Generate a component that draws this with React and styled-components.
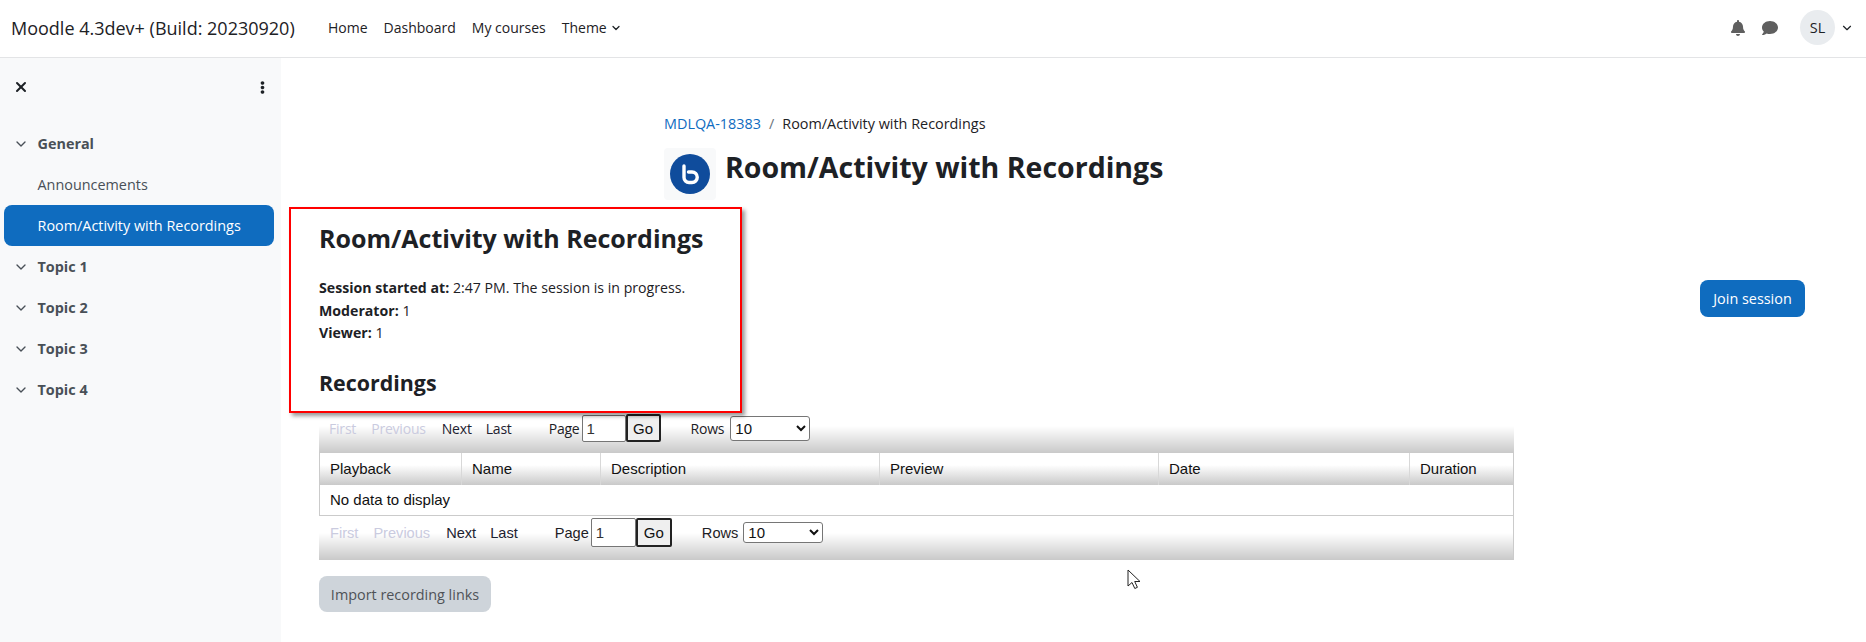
import React from 'react';
import styled, { createGlobalStyle } from 'styled-components';
import { FaBell, FaComment, FaEllipsisV } from 'react-icons/fa';
import { ChevronDown, X } from 'lucide-react';

const UI = '"Open Sans", "Noto Sans", sans-serif';
const ARIAL = '"Liberation Sans", Arial, sans-serif';

const Global = createGlobalStyle`
  html, body { margin: 0; padding: 0; background: #fff; overflow: hidden; }
  * { box-sizing: border-box; }
  body { font-family: ${UI}; color: #1d2125; }
`;

const Page = styled.div`
  width: 1866px;
  height: 642px;
  display: flex;
  flex-direction: column;
  position: relative;
`;

const Navbar = styled.header`
  height: 58px;
  flex: none;
  display: flex;
  align-items: center;
  border-bottom: 1px solid #e3e4e6;
  padding: 0 0 2px 11px;
`;

const Brand = styled.span`
  font-size: 18px;
  width: 317px;
  flex: none;
`;

const NavLinks = styled.nav`
  display: flex;
  gap: 16px;
  font-size: 14px;
`;

const NavLink = styled.span`
  display: inline-flex;
  align-items: center;
  gap: 3px;
`;

const NavRight = styled.div`
  margin-left: auto;
  display: flex;
  align-items: center;
  color: #5f5f5f;
  padding-right: 12px;
`;

const NavIcon = styled.span`
  display: inline-flex;
  width: ${(p) => p.$w}px;
  justify-content: center;
  font-size: 16px;
`;

const Avatar = styled.span`
  width: 35px;
  height: 35px;
  border-radius: 50%;
  background: #e9ecef;
  color: #1d2125;
  display: flex;
  align-items: center;
  justify-content: center;
  font-size: 14.4px;
  margin: 0 5px 0 14px;
`;

const Body = styled.div`
  flex: 1;
  display: flex;
  min-height: 0;
`;

const Sidebar = styled.aside`
  width: 281px;
  flex: none;
  background: #f8f9fa;
  padding: 0 7px 0 4px;
`;

const SideTop = styled.div`
  height: 58px;
  display: flex;
  align-items: center;
  justify-content: space-between;
  padding: 0 5px 0 9px;
  color: #1d2125;
  margin-bottom: 7px;
`;

const SideRow = styled.div`
  height: 41px;
  display: flex;
  align-items: center;
  border-radius: 8px;
  padding-left: ${(p) => (p.$section ? '9px' : '33.5px')};
  font-size: 14.4px;
  font-weight: ${(p) => (p.$section ? 700 : 400)};
  color: ${(p) => (p.$active ? '#fff' : '#495057')};
  background: ${(p) => (p.$active ? '#0f6cbf' : 'transparent')};
  gap: 8.5px;
`;

const Main = styled.main`
  flex: 1;
  position: relative;
  padding: 55px 61px 0 38px;
`;

const Breadcrumb = styled.div`
  margin-left: 345px;
  font-size: 14.4px;
  line-height: 22px;
  display: flex;
  gap: 8px;
`;

const Crumb = styled.span`
  color: ${(p) => (p.$link ? '#0f6cbf' : p.$sep ? '#6a737b' : '#1d2125')};
`;

const TitleRow = styled.div`
  margin: 13px 0 0 345px;
  display: flex;
  gap: 9px;
`;

const IconBox = styled.div`
  width: 52px;
  height: 52px;
  background: #f8f9fa;
  border-radius: 4px;
  display: flex;
  align-items: center;
  justify-content: center;
`;

const Title = styled.h1`
  margin: -1px 0 0;
  font-size: 28.5px;
  line-height: 40px;
  font-weight: 700;
`;

const JoinRow = styled.div`
  margin-top: 80px;
  display: flex;
  justify-content: flex-end;
`;

const JoinButton = styled.button`
  width: 105px;
  height: 37px;
  border: 0;
  border-radius: 8px;
  background: #0f6cbf;
  color: #fff;
  font: 14.4px ${UI};
  padding: 0;
`;

const Recordings = styled.section`
  margin-top: 93px;
  width: 1195px;
`;

const Paginator = styled.div`
  display: flex;
  align-items: center;
  height: ${(p) => (p.$top ? 43 : 44)}px;
  padding: ${(p) => (p.$top ? '4px 0 11px 10px' : '3px 0 14px 11px')};
  background: linear-gradient(to top, #c9c9c9 0, #fff 27px);
  border-right: ${(p) => (p.$top ? '0' : '1px solid #cbcbcb')};
  font-family: ${(p) => (p.$top ? UI : ARIAL)};
  font-size: ${(p) => (p.$top ? '14px' : '14.6px')};
  letter-spacing: ${(p) => (p.$top ? '-0.2px' : '0')};
  color: #1d2125;
`;

const PageLink = styled.span`
  margin-right: ${(p) => p.$mr}px;
  color: ${(p) => (p.$off ? '#cacbdf' : '#1d2130')};
`;

const PageInput = styled.input`
  width: ${(p) => (p.$top ? 44 : 45)}px;
  height: ${(p) => (p.$top ? 27 : 29)}px;
  border: 1px solid #767676;
  border-radius: 2px;
  padding: 1px 2px 1px 4px;
  margin: 0 0 0 2px;
  background: #fff;
  font: 15px ${ARIAL};
  color: #333;
`;

const GoButton = styled.button`
  width: ${(p) => (p.$top ? 35 : 36)}px;
  height: ${(p) => (p.$top ? 28 : 29)}px;
  border: 2px solid #222;
  border-radius: 2px;
  background: #efefef;
  font: 15px ${ARIAL};
  color: #111;
  padding: 0;
  margin-right: 30px;
`;

const RowsSelect = styled.select`
  width: 80px;
  height: ${(p) => (p.$top ? 25 : 21)}px;
  margin-left: ${(p) => (p.$top ? 6 : 5)}px;
  border: 1px solid #767676;
  border-radius: 3px;
  background: #fff;
  font: 15px ${ARIAL};
  color: #111;
`;

const Grid = styled.div`
  display: grid;
  grid-template-columns: 142px 139px 279px 279px 251px 1fr;
  font-family: ${ARIAL};
  font-size: 15px;
  color: #111;
  border-left: 1px solid #cbcbcb;
  border-right: 1px solid #cbcbcb;
`;

const HeadCell = styled.div`
  height: 32px;
  display: flex;
  align-items: center;
  padding: 0 0 2px 10px;
  background: linear-gradient(to top, #c9c9c9 0, #fff 20px);
  border-right: ${(p) => (p.$last ? '0' : '1px solid #d8d8d8')};
`;

const EmptyCell = styled.div`
  grid-column: 1 / -1;
  height: 31px;
  display: flex;
  align-items: center;
  padding: 0 0 2px 10px;
  border-bottom: 1px solid #cbcbcb;
`;

const ImportButton = styled.button`
  display: block;
  margin-top: 16px;
  width: 172px;
  height: 36px;
  border: 0;
  border-radius: 8px;
  background: #ced4da;
  color: #4e5257;
  font: 14.4px ${UI};
  padding: 0;
`;

const Callout = styled.div`
  position: absolute;
  left: 8px;
  top: 149px;
  width: 453px;
  height: 206px;
  border: 2px solid #f00;
  background: #fff;
  box-shadow: 3px 3px 4px rgba(0, 0, 0, 0.4);
  padding: 11px 0 0 28px;
`;

const CalloutTitle = styled.h2`
  margin: 0;
  font-size: 25px;
  line-height: 36px;
  font-weight: 700;
`;

const InfoList = styled.div`
  margin-top: 21px;
  font-size: 14.15px;
  line-height: 22.5px;
`;

const CalloutSub = styled.h3`
  margin: 23px 0 0;
  font-size: 21.4px;
  line-height: 30px;
  font-weight: 700;
`;

const Pointer = styled.svg`
  position: absolute;
  left: 1127px;
  top: 569px;
`;

const BbbLogo = () => (
  <svg width="40" height="40" viewBox="0 0 40 40">
    <circle cx="20" cy="20" r="20" fill="#0f4c9c" />
    <path
      d="M14 12v11.5a5 5 0 0 0 5 5h3a5 5 0 0 0 0-10.5h-3.5"
      fill="none"
      stroke="#fff"
      strokeWidth="3.4"
      strokeLinecap="round"
    />
  </svg>
);

const Pager = ({ top }) => (
  <Paginator $top={top}>
    <PageLink $off $mr={15}>First</PageLink>
    <PageLink $off $mr={16}>Previous</PageLink>
    <PageLink $mr={14}>Next</PageLink>
    <PageLink $mr={37}>Last</PageLink>
    <span>Page</span>
    <PageInput $top={top} defaultValue="1" />
    <GoButton $top={top}>Go</GoButton>
    <span>Rows</span>
    <RowsSelect $top={top} defaultValue="10">
      <option>10</option>
    </RowsSelect>
  </Paginator>
);

const sections = ['Topic 1', 'Topic 2', 'Topic 3', 'Topic 4'];
const columns = ['Playback', 'Name', 'Description', 'Preview', 'Date', 'Duration'];

const Chevron = () => <ChevronDown size={16} strokeWidth={2} color="#495057" />;

export default function App() {
  return (
    <Page>
      <Global />
      <Navbar>
        <Brand>Moodle 4.3dev+ (Build: 20230920)</Brand>
        <NavLinks>
          <NavLink>Home</NavLink>
          <NavLink>Dashboard</NavLink>
          <NavLink>My courses</NavLink>
          <NavLink>
            Theme <ChevronDown size={12} strokeWidth={2.5} />
          </NavLink>
        </NavLinks>
        <NavRight>
          <NavIcon $w={32}><FaBell /></NavIcon>
          <NavIcon $w={32}><FaComment /></NavIcon>
          <Avatar>SL</Avatar>
          <ChevronDown size={14} strokeWidth={2} color="#1d2125" />
        </NavRight>
      </Navbar>
      <Body>
        <Sidebar>
          <SideTop>
            <X size={16} strokeWidth={3} />
            <FaEllipsisV size={13} />
          </SideTop>
          <SideRow $section><Chevron />General</SideRow>
          <SideRow>Announcements</SideRow>
          <SideRow $active>Room/Activity with Recordings</SideRow>
          {sections.map((s) => (
            <SideRow $section key={s}><Chevron />{s}</SideRow>
          ))}
        </Sidebar>
        <Main>
          <Breadcrumb>
            <Crumb $link>MDLQA-18383</Crumb>
            <Crumb $sep>/</Crumb>
            <Crumb>Room/Activity with Recordings</Crumb>
          </Breadcrumb>
          <TitleRow>
            <IconBox><BbbLogo /></IconBox>
            <Title>Room/Activity with Recordings</Title>
          </TitleRow>
          <JoinRow><JoinButton>Join session</JoinButton></JoinRow>
          <Recordings>
            <Pager top />
            <Grid>
              {columns.map((c, i) => (
                <HeadCell key={c} $last={i === columns.length - 1}>{c}</HeadCell>
              ))}
              <EmptyCell>No data to display</EmptyCell>
            </Grid>
            <Pager />
          </Recordings>
          <ImportButton>Import recording links</ImportButton>
          <Callout>
            <CalloutTitle>Room/Activity with Recordings</CalloutTitle>
            <InfoList>
              <div><b>Session started at:</b> 2:47 PM. The session is in progress.</div>
              <div><b>Moderator:</b> 1</div>
              <div><b>Viewer:</b> 1</div>
            </InfoList>
            <CalloutSub>Recordings</CalloutSub>
          </Callout>
        </Main>
      </Body>
      <Pointer width="14" height="21" viewBox="0 0 14 21">
        <path d="M1 1v16l4-3.5 2.8 6 2.6-1.2-2.7-5.8H13z" fill="#fff" stroke="#222" strokeWidth="1" strokeLinejoin="round" />
      </Pointer>
    </Page>
  );
}
